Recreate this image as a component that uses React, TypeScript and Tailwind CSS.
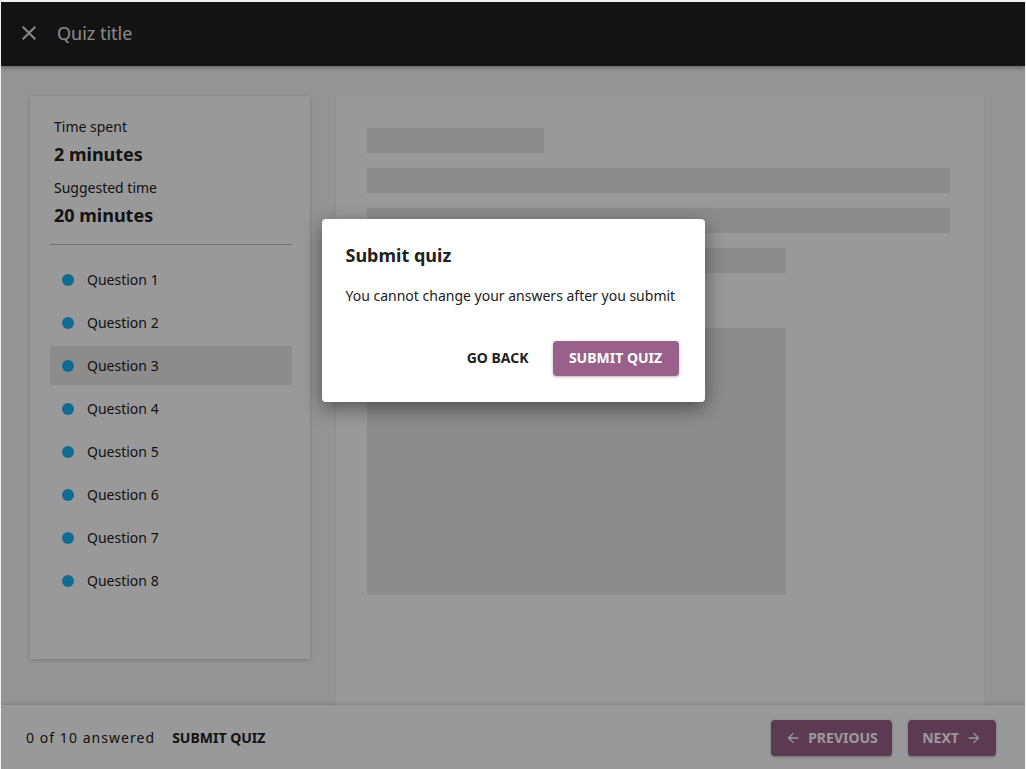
import React from "react";

const questions = [1, 2, 3, 4, 5, 6, 7, 8];

function CloseIcon({ size = 24 }: { size?: number }) {
  return (
    <svg width={size} height={size} viewBox="0 0 24 24" fill="currentColor">
      <path d="M19 6.41L17.59 5 12 10.59 6.41 5 5 6.41 10.59 12 5 17.59 6.41 19 12 13.41 17.59 19 19 17.59 13.41 12z" />
    </svg>
  );
}

function ArrowBack({ size = 16 }: { size?: number }) {
  return (
    <svg width={size} height={size} viewBox="0 0 24 24" fill="currentColor">
      <path d="M20 11H7.83l5.59-5.59L12 4l-8 8 8 8 1.41-1.41L7.83 13H20v-2z" />
    </svg>
  );
}

function ArrowForward({ size = 16 }: { size?: number }) {
  return (
    <svg width={size} height={size} viewBox="0 0 24 24" fill="currentColor">
      <path d="M12 4l-1.41 1.41L16.17 11H4v2h12.17l-5.58 5.59L12 20l8-8z" />
    </svg>
  );
}

export default function App() {
  return (
    <div
      className="relative h-screen flex flex-col overflow-hidden bg-[#f7f7f7] border-t-2 border-x border-[#f2f2f2] text-[#212121]"
      style={{ fontFamily: '"Noto Sans", "Open Sans", sans-serif' }}
    >
      {/* APP BAR */}
      <header className="h-16 shrink-0 bg-[#212121] flex items-center pl-4 pb-[2px] gap-4 shadow-[0_2px_4px_rgba(0,0,0,0.3)] z-10">
        <span className="text-[#e6e6e6]">
          <CloseIcon size={24} />
        </span>
        <h1 className="text-lg text-[#e6e6e6]">Quiz title</h1>
      </header>

      {/* CONTENT */}
      <div className="flex-1 min-h-0 flex items-start gap-[26px] pl-[29px] pr-[41px] pt-[30px]">
        {/* SIDEBAR */}
        <aside className="w-[280px] h-[563px] shrink-0 bg-white shadow-[0_1px_4px_rgba(0,0,0,0.2)] pt-[21px] pl-5 pr-[18px]">
          <div className="px-1">
            <p className="text-sm leading-5">Time spent</p>
            <p className="text-lg font-bold leading-[27px] mt-1">2 minutes</p>
            <p className="text-sm leading-5 mt-[10px]">Suggested time</p>
            <p className="text-lg font-bold leading-[27px] mt-1">20 minutes</p>
          </div>
          <div className="h-px bg-[#bdbdbd] mt-[15px]" />
          <ul className="mt-[15px] flex flex-col gap-1">
            {questions.map((q) => (
              <li
                key={q}
                className={`h-[39px] flex items-center gap-[13px] pl-3 text-sm ${
                  q === 3 ? "bg-[#e9e9e9]" : ""
                }`}
              >
                <span className="w-3 h-3 rounded-full bg-[#1ab2f5]" />
                Question {q}
              </li>
            ))}
          </ul>
        </aside>

        {/* QUESTION AREA */}
        <main className="flex-1 self-stretch bg-white border-x border-[#eeeeee] -ml-px -mr-px pl-[31px] pr-[34px] pt-[32px]">
          <div className="h-[25px] w-[177px] bg-[#e9e9e9]" />
          <div className="h-[25px] bg-[#e9e9e9] mt-[15px]" />
          <div className="h-[25px] bg-[#e9e9e9] mt-[15px]" />
          <div className="h-[25px] w-[419px] bg-[#e9e9e9] mt-[15px]" />
          <div className="h-[267px] w-[419px] bg-[#e9e9e9] mt-[55px]" />
        </main>
      </div>

      {/* BOTTOM BAR */}
      <footer className="h-16 shrink-0 bg-white shadow-[0_-2px_4px_rgba(0,0,0,0.12)] flex items-center justify-between pl-[25px] pr-[29px] pt-[2px] z-10">
        <div className="flex items-center gap-[17px] text-sm">
          <span className="tracking-[1.05px]">0 of 10 answered</span>
          <button className="font-bold uppercase">Submit quiz</button>
        </div>
        <div className="flex items-center gap-4">
          <button className="h-9 w-[121px] rounded-sm bg-[#996189] text-white text-sm font-bold flex items-center justify-center gap-[7px] shadow-[0_1px_3px_rgba(0,0,0,0.3)]">
            <ArrowBack size={16} />
            PREVIOUS
          </button>
          <button className="h-9 w-[88px] rounded-sm bg-[#996189] text-white text-sm font-bold flex items-center justify-center gap-[7px] shadow-[0_1px_3px_rgba(0,0,0,0.3)]">
            NEXT
            <ArrowForward size={16} />
          </button>
        </div>
      </footer>

      {/* MODAL */}
      <div className="absolute inset-0 z-20 bg-black/40 flex justify-center items-start pt-[217px]">
        <div className="w-[383px] bg-white rounded-sm shadow-[0_6px_20px_rgba(0,0,0,0.45)] pl-6 pr-[26px] pt-6 pb-[26px]">
          <h2 className="text-lg font-bold leading-6">Submit quiz</h2>
          <p className="text-sm leading-5 mt-[19px]">
            You cannot change your answers after you submit
          </p>
          <div className="flex justify-end items-center gap-2 mt-[34px]">
            <button className="h-9 px-4 text-sm font-bold uppercase">Go back</button>
            <button className="h-[35px] w-[126px] rounded-sm bg-[#996189] text-white text-sm font-bold uppercase shadow-[0_1px_3px_rgba(0,0,0,0.3)]">
              Submit quiz
            </button>
          </div>
        </div>
      </div>
    </div>
  );
}
